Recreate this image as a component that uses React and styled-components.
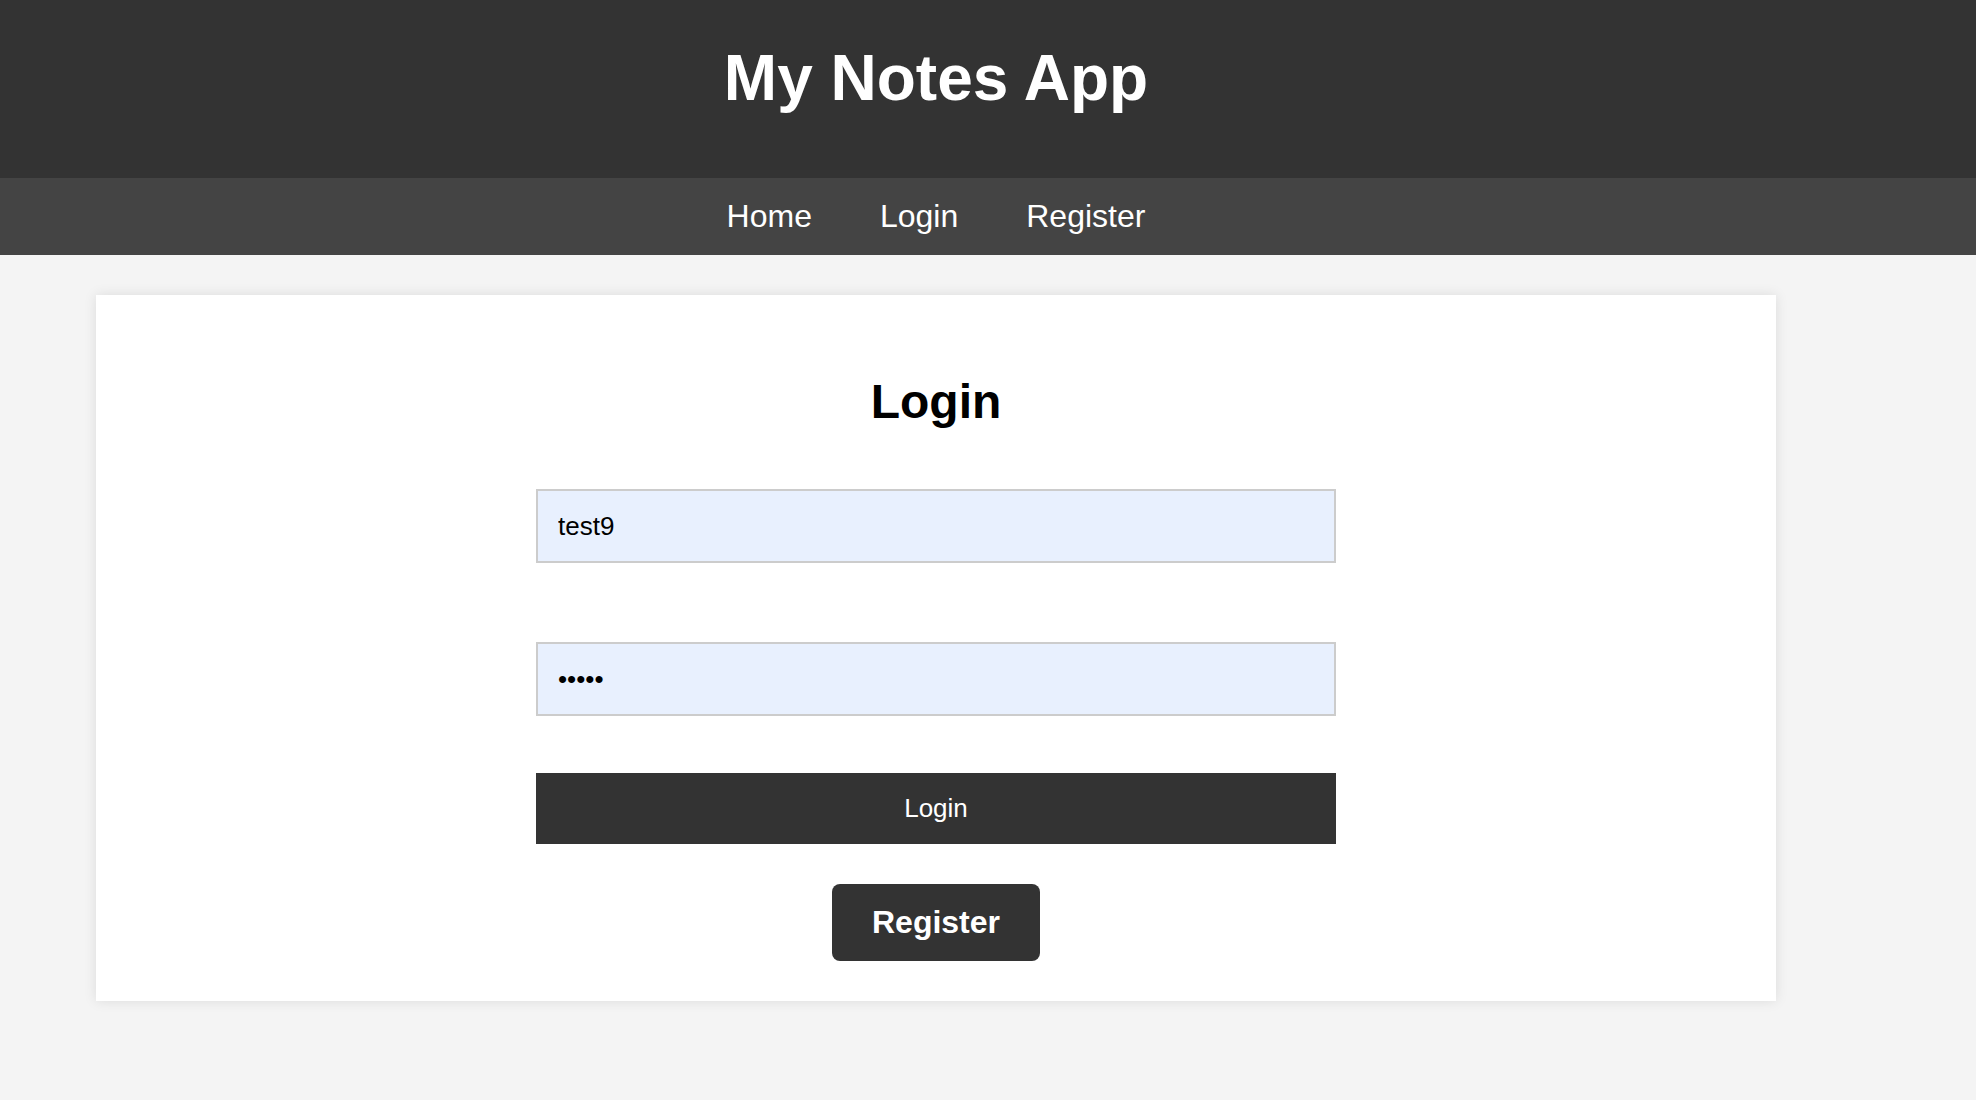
import React from "react";
import styled, { createGlobalStyle } from "styled-components";

const GlobalStyle = createGlobalStyle`
  body {
    margin: 0;
    background-color: #f4f4f4;
    font-family: "Liberation Sans", Arial, Helvetica, sans-serif;
  }
`;

const App = () => {
  return (
    <>
      <GlobalStyle />
      <HeaderContainer>
        <Inner>
          <Title>My Notes App</Title>
        </Inner>
      </HeaderContainer>
      <Navbar>
        <NavInner>
          <NavLink href="#">Home</NavLink>
          <NavLink href="#">Login</NavLink>
          <NavLink href="#">Register</NavLink>
        </NavInner>
      </Navbar>
      <Main>
        <Card>
          <FormTitle>Login</FormTitle>
          <Form onSubmit={(event) => event.preventDefault()}>
            <Input type="text" defaultValue="test9" />
            <Input type="password" defaultValue="12345" $gap="79px" />
            <SubmitButton type="submit">Login</SubmitButton>
          </Form>
          <ButtonRow>
            <RegisterButton type="button">Register</RegisterButton>
          </ButtonRow>
        </Card>
      </Main>
    </>
  );
};

const HeaderContainer = styled.header`
  background-color: #333333;
  padding: 42px 0 64px;
`;

const Inner = styled.div`
  width: 1872px;
  text-align: center;
`;

const Title = styled.h1`
  margin: 0;
  color: #ffffff;
  font-size: 64px;
  line-height: 72px;
  font-weight: bold;
`;

const Navbar = styled.nav`
  background-color: #444444;
  padding: 20px 0;
`;

const NavInner = styled.div`
  width: 1872px;
  display: flex;
  justify-content: center;
  gap: 68px;
`;

const NavLink = styled.a`
  color: #ffffff;
  text-decoration: none;
  font-size: 32px;
  line-height: 37px;
`;

const Main = styled.main`
  width: 1872px;
  padding: 40px 0;
`;

const Card = styled.div`
  width: 1680px;
  margin: 0 auto;
  box-sizing: border-box;
  padding: 80px 0 40px;
  background-color: #ffffff;
  box-shadow: 0 0 12px rgba(0, 0, 0, 0.1);
`;

const FormTitle = styled.h2`
  margin: 0;
  text-align: center;
  font-size: 48px;
  line-height: 53px;
  font-weight: bold;
  color: #000000;
`;

const Form = styled.form`
  width: 800px;
  margin: 61px auto 0;
  display: flex;
  flex-direction: column;
`;

const Input = styled.input`
  box-sizing: border-box;
  width: 100%;
  height: 74px;
  margin-top: ${(props) => props.$gap || "0"};
  padding: 0 20px;
  border: 2px solid #cccccc;
  border-radius: 0;
  background-color: #e8f0fe;
  color: #000000;
  font-family: "Liberation Sans", Arial, Helvetica, sans-serif;
  font-size: 26px;
  outline: none;
`;

const SubmitButton = styled.button`
  height: 71px;
  margin-top: 57px;
  border: none;
  background-color: #333333;
  color: #ffffff;
  font-family: "Liberation Sans", Arial, Helvetica, sans-serif;
  font-size: 26px;
  cursor: pointer;
`;

const ButtonRow = styled.div`
  display: flex;
  justify-content: center;
  margin-top: 40px;
`;

const RegisterButton = styled.button`
  padding: 20px 40px;
  border: none;
  border-radius: 8px;
  background-color: #333333;
  color: #ffffff;
  font-family: "Liberation Sans", Arial, Helvetica, sans-serif;
  font-size: 32px;
  line-height: 37px;
  font-weight: bold;
  cursor: pointer;
`;

export default App;
